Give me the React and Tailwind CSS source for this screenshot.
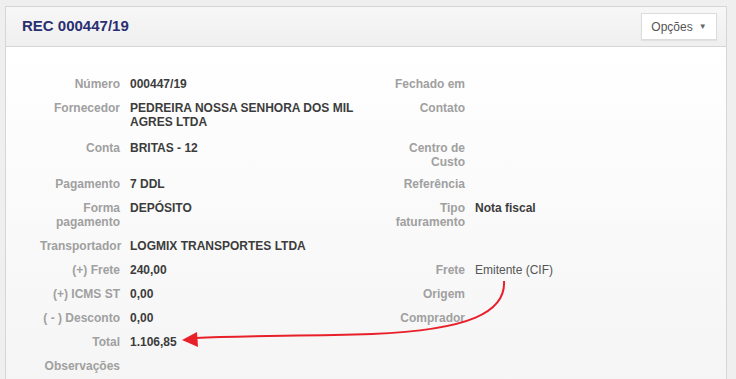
import React from "react";

const rows = [
    [["Número", "000447/19"], ["Fechado em", ""]],
    [["Fornecedor", "PEDREIRA NOSSA SENHORA DOS MIL AGRES LTDA"], ["Contato", ""]],
    [["Conta", "BRITAS - 12"], ["Centro de Custo", ""]],
    [["Pagamento", "7 DDL"], ["Referência", ""]],
    [["Forma pagamento", "DEPÓSITO"], ["Tipo faturamento", "Nota fiscal"]],
    [["Transportador", "LOGMIX TRANSPORTES LTDA"], null],
    [["(+) Frete", "240,00"], ["Frete", "Emitente (CIF)", true]],
    [["(+) ICMS ST", "0,00"], ["Origem", ""]],
    [["( - ) Desconto", "0,00"], ["Comprador", ""]],
    [["Total", "1.106,85"], null],
    [["Observações", ""], null],
];

const Field = ({item, wide}) => {
    if (!item) return <div className={wide ? "w-[345px]" : "flex-1"}/>;
    const [label, value, light] = item;
    return (
        <div className={(wide ? "w-[345px] " : "flex-1 ") + "flex"}>
            <div className="w-[80px] shrink-0 text-right font-bold text-[#a0a0a0]">{label}</div>
            <div className={(light ? "font-normal text-[#555]" : "font-bold text-[#3c3c3c]") + " ml-[10px] flex-1 pr-[15px]"}>
                {value}
            </div>
        </div>
    );
};

export default function App() {
    return (
        <div className="relative h-[379px] w-[736px] overflow-hidden bg-[#efefef] pt-[6px] pl-[5px] font-['Liberation_Sans',Arial,sans-serif]">
            <div className="w-[722px] border border-[#d6d6d6] bg-white">
                <div className="flex h-[40px] items-center justify-between border-b border-[#d6d6d6] bg-gradient-to-b from-[#f7f7f7] to-[#efefef] pl-[16px] pr-[9px]">
                    <h1 className="text-[15px] font-bold text-[#2a2f72]">REC 000447/19</h1>
                    <button className="flex h-[27px] w-[76px] items-center justify-center gap-[6px] border border-[#dcdcdc] bg-white text-[12px] text-[#555] shadow-[0_1px_1px_rgba(0,0,0,0.06)]">
                        Opções
                        <span className="text-[8px] text-[#666]">▼</span>
                    </button>
                </div>
                <div className="h-[400px] bg-gradient-to-b from-white to-[#f3f3f3] pt-[30px] pl-[34px] text-[12px] leading-[14px]">
                    {rows.map((r, i) => (
                        <div key={i} className={(i === 1 ? "mb-[12px]" : i === 2 ? "mb-[8px]" : "mb-[10px]") + " flex"}>
                            <Field item={r[0]} wide/>
                            <Field item={r[1]}/>
                        </div>
                    ))}
                </div>
            </div>
            <svg className="pointer-events-none absolute left-0 top-0" width="736" height="379">
                <path d="M504 281 C506 312 470 330 372 334 C300 336 240 336 196 338" fill="none" stroke="#e8202a" strokeWidth="2"/>
                <polygon points="182,340 197,332 198,347" fill="#e8202a"/>
            </svg>
        </div>
    );
}
